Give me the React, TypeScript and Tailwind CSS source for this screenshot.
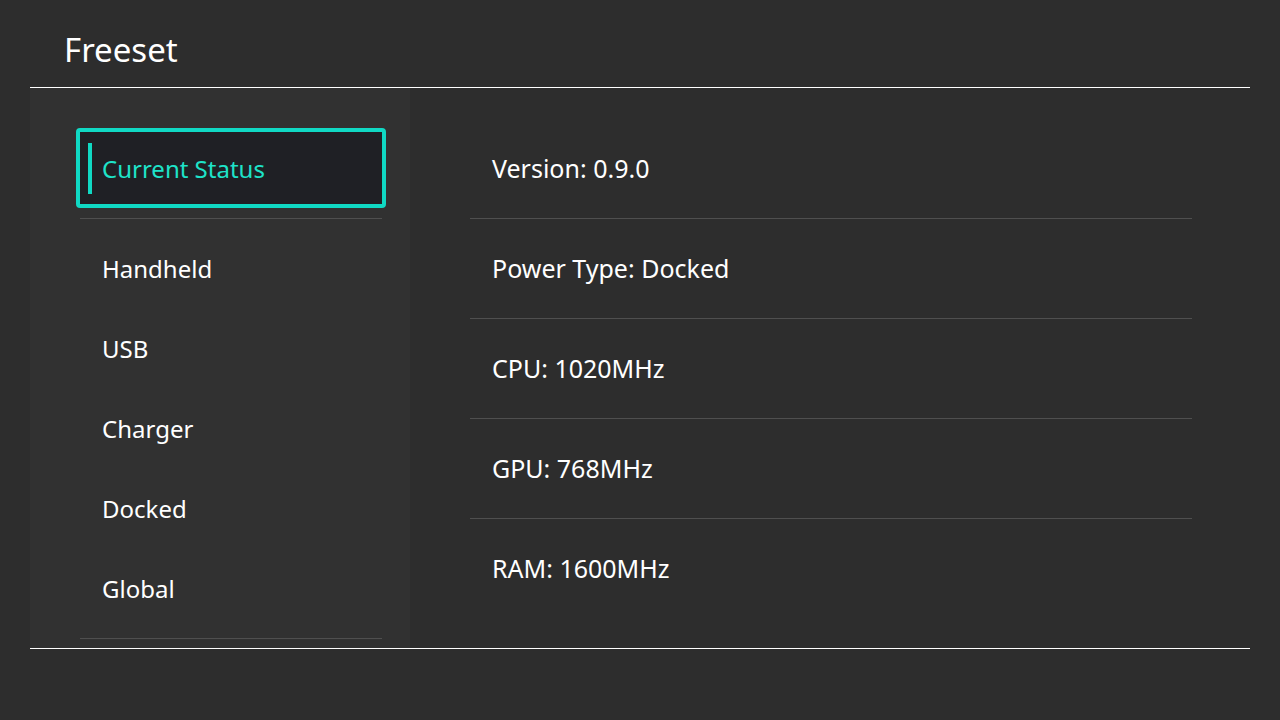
const sections = ['Handheld', 'USB', 'Charger', 'Docked', 'Global']

const status = [
  'Version: 0.9.0',
  'Power Type: Docked',
  'CPU: 1020MHz',
  'GPU: 768MHz',
  'RAM: 1600MHz',
]

const font = { fontFamily: '"Noto Sans", "Open Sans", sans-serif' }

function Separator({ className }: { className: string }) {
  return (
    <div className={`flex items-center px-1 ${className}`}>
      <div className="h-px w-full bg-[#4f4f4f]" />
    </div>
  )
}

function Sidebar() {
  return (
    <div className="w-[380px] shrink-0 bg-[#313131] pl-[46px] pr-[24px] pt-[40px]">
      <div className="flex h-[80px] items-center rounded-[4px] border-4 border-[#10d9c4] bg-[#1f2025] pl-2">
        <div className="h-[51px] w-1 bg-[#10d9c4]" />
        <span className="ml-[10px] pt-[2px] text-[24px] text-[#1ee3c9]">Current Status</span>
      </div>
      <Separator className="h-[21px]" />
      {sections.map(name => (
        <div key={name} className="flex h-[80px] items-center pl-[26px] text-[24px] text-white">
          {name}
        </div>
      ))}
      <Separator className="h-[19px]" />
    </div>
  )
}

export default function App() {
  return (
    <div className="flex h-[720px] w-[1280px] flex-col bg-[#2d2d2d] text-white" style={font}>
      <div className="mx-[30px] flex h-[88px] shrink-0 items-end border-b border-white pb-[21px] pl-[34px]">
        <h1 className="text-[33px] leading-none">Freeset</h1>
      </div>
      <div className="mx-[30px] flex h-[561px] border-b border-white">
        <Sidebar />
        <div className="flex-1 pl-[60px] pr-[58px] pt-[31px]">
          {status.map((line, i) => (
            <div
              key={line}
              className={`flex h-[100px] items-center pl-[22px] text-[25px] ${
                i < status.length - 1 ? 'border-b border-[#4f4f4f]' : ''
              }`}
            >
              {line}
            </div>
          ))}
        </div>
      </div>
    </div>
  )
}
